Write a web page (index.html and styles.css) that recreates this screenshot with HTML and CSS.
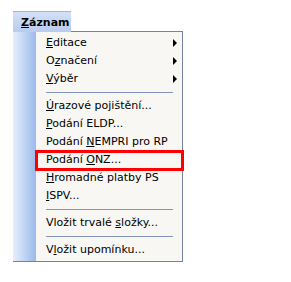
FILE: index.html
```html
<!DOCTYPE html>
<html lang="cs">
<head>
<meta charset="utf-8">
<link rel="stylesheet" href="styles.css">
</head>
<body>
<div class="wrap">
  <div class="bar">
    <div class="head"><u>Z</u>áznam</div>
    <div class="fill"></div>
  </div>
  <div class="menu">
    <div class="side"></div>
    <div class="items">
      <div class="item sub"><span><u>E</u>ditace</span><i class="arr"></i></div>
      <div class="item sub"><span>O<u>z</u>načení</span><i class="arr"></i></div>
      <div class="item sub"><span><u>V</u>ýběr</span><i class="arr"></i></div>
      <div class="sep"></div>
      <div class="item"><span><u>Ú</u>razové pojištění...</span></div>
      <div class="item"><span><u>P</u>odání ELDP...</span></div>
      <div class="item"><span>Podání <u>N</u>EMPRI pro RP</span></div>
      <div class="item mark"><span>Podání <u>O</u>NZ...</span></div>
      <div class="item"><span><u>H</u>romadné platby PS</span></div>
      <div class="item"><span><u>I</u>SPV...</span></div>
      <div class="sep"></div>
      <div class="item"><span>Vložit trvalé <u>s</u>ložky...</span></div>
      <div class="sep"></div>
      <div class="item"><span>V<u>l</u>ožit upomínku...</span></div>
    </div>
  </div>
</div>
</body>
</html>
```
FILE: styles.css
```css
html, body {
  margin: 0;
  padding: 0;
  background: #ffffff;
}
.wrap {
  padding: 11px 0 0 13px;
  width: 170px;
  font-family: "DejaVu Sans", sans-serif;
  font-size: 11px;
  color: #000;
}
.bar {
  display: flex;
  height: 21px;
}
.head {
  width: 58px;
  box-sizing: border-box;
  border-top: 1px solid #a3b4d6;
  background-color: #c2d3f1;
  background-image: linear-gradient(to bottom, #d3e0f6, #b9ccef);
  font-weight: bold;
  padding: 3px 0 0 8px;
  line-height: 16px;
}
.fill {
  flex: 1;
  border-bottom: 1px solid #7583a3;
}
.menu {
  box-sizing: border-box;
  border-right: 1px solid #7583a3;
  border-bottom: 1px solid #7583a3;
  background-color: #f8f7f4;
  display: flex;
}
.side {
  width: 23px;
  flex: none;
  background-color: #bcd0f2;
  background-image: linear-gradient(to right, #e6effc, #9bb9ea);
}
.items {
  flex: 1;
  padding: 2px 0 2px 0;
  display: flex;
  flex-direction: column;
}
.item {
  position: relative;
  height: 18px;
  line-height: 18px;
  padding-left: 10px;
  display: flex;
  align-items: center;
  white-space: nowrap;
}
.item span {
  flex: 1;
}
.arr {
  width: 0;
  height: 0;
  border-top: 4px solid transparent;
  border-bottom: 4px solid transparent;
  border-left: 4px solid #000;
  margin-right: 5px;
}
.sep {
  height: 1px;
  margin: 4px 9px 4px 10px;
  background: #8295bb;
}
.mark::after {
  content: "";
  position: absolute;
  left: -1px;
  right: -2px;
  top: -1px;
  bottom: -2px;
  border: 3px solid #ff0000;
}
```
